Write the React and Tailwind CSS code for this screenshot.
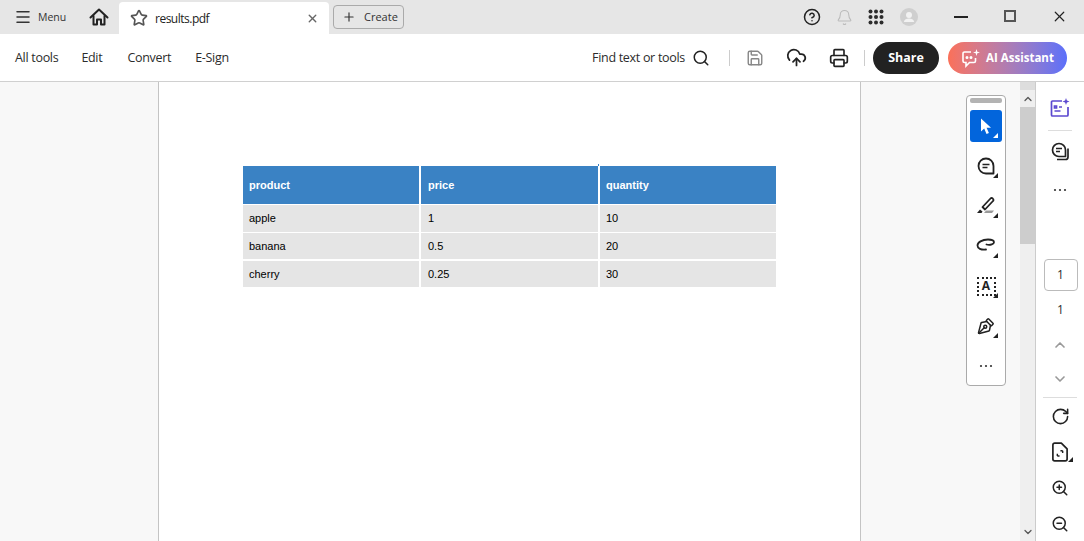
import React from 'react'
import { Menu, Star, X, Plus, CircleHelp, Bell, Search, Save, CloudUpload, Printer, ChevronUp, ChevronDown, RotateCw, ZoomIn, ZoomOut, PenTool } from 'lucide-react'

const font = { fontFamily: '"Open Sans", "Noto Sans", sans-serif' }

function Corner({ white }) {
  return (
    <span className={`absolute right-[4px] bottom-[4px] w-0 h-0 border-l-[5px] border-l-transparent border-b-[5px] ${white ? 'border-b-white' : 'border-b-[#222]'}`} />
  )
}

function HomeIcon() {
  return (
    <svg width="20" height="18" viewBox="0 0 20 18" fill="none" stroke="#222" strokeWidth="2" strokeLinejoin="round" strokeLinecap="round">
      <path d="M1.500 9.500L10 1.500l8.500 8" />
      <path d="M4.500 8v8.500h3.500V11.500h4v5h3.500V8" />
    </svg>
  )
}

function AppsGrid() {
  return (
    <svg width="16" height="16" viewBox="0 0 16 16" fill="#2c2c2c">
      {[2.500, 8, 13.500].map(y => [2.500, 8, 13.500].map(x => <circle key={`${x}-${y}`} cx={x} cy={y} r="2" />))}
    </svg>
  )
}

function Avatar() {
  return (
    <svg width="18" height="18" viewBox="0 0 18 18">
      <circle cx="9" cy="9" r="9" fill="#cfcfcf" />
      <circle cx="9" cy="7" r="3" fill="#f2f2f2" />
      <path d="M3.800 14c.6-2.600 2.600-3.400 5.200-3.400s4.600.8 5.200 3.400z" fill="#f2f2f2" />
    </svg>
  )
}

function AiIcon() {
  return (
    <svg width="20" height="20" viewBox="0 0 20 20" fill="none" stroke="#fff" strokeWidth="1.600">
      <path d="M10 4H3.500A1.500 1.500 0 0 0 2 5.500V13a1.500 1.500 0 0 0 1.500 1.500H5V18l3.500-3.500H13a1.500 1.500 0 0 0 1.500-1.500V10" />
      <circle cx="6" cy="9.500" r="0.700" fill="#fff" />
      <circle cx="10" cy="9.500" r="0.700" fill="#fff" />
      <path d="M15.500 1l.8 2.700L19 4.500l-2.700.8-.8 2.700-.8-2.700L12 4.500l2.700-.8z" fill="#fff" stroke="none" />
    </svg>
  )
}

function Cursor() {
  return (
    <svg width="12" height="17" viewBox="0 0 12 17" fill="#fff">
      <path d="M1 0.500v13l3.200-3 2.300 5.500 2.400-1-2.300-5.300H11z" />
    </svg>
  )
}

function Dots() {
  return (
    <svg width="14" height="4" viewBox="0 0 14 4" fill="#333">
      <circle cx="2" cy="2" r="1.100" />
      <circle cx="7" cy="2" r="1.100" />
      <circle cx="12" cy="2" r="1.100" />
    </svg>
  )
}

function Bubble({ size = 18 }) {
  return (
    <svg width={size} height={size} viewBox="0 0 18 18" fill="none" stroke="#222" strokeWidth="1.800">
      <path d="M9 1.500a7.500 7.500 0 1 0 0 15h7.500V9A7.500 7.500 0 0 0 9 1.500z" strokeLinejoin="round" />
      <path d="M5.500 7.500h7M5.500 10.500h5" strokeWidth="1.500" />
    </svg>
  )
}

function Highlighter() {
  return (
    <svg width="20" height="20" viewBox="0 0 20 20" fill="none" stroke="#222" strokeWidth="1.800">
      <path d="M6.500 11l8-8.500a1.500 1.500 0 0 1 2.200 0l.3.3a1.500 1.500 0 0 1 0 2.200L9 13.500z" strokeLinejoin="round" />
      <path d="M1 17l3-3.500 2.500 2-1 1.500z" fill="#222" stroke="none" />
      <path d="M8 17l2-2.500h8L16 17z" fill="#9a9a9a" stroke="none" />
    </svg>
  )
}

function Lasso() {
  return (
    <svg width="20" height="16" viewBox="0 0 20 16" fill="none" stroke="#222" strokeWidth="1.800" strokeLinecap="round">
      <path d="M10 11.500C5 12 1.500 10.500 1.500 7.500S6 1.500 12 1.500c4 0 6 1.200 6 2.800S14.500 7.500 10.500 6.500" />
    </svg>
  )
}

function TextSelect() {
  return (
    <div className="w-[19px] h-[19px] border-2 border-dotted border-[#222] flex items-center justify-center text-[12px] font-bold text-[#222] leading-none">
      A
    </div>
  )
}

function Tool({ children }) {
  return (
    <div className="relative w-[32px] h-[32px] mt-[8px] flex items-center justify-center">
      {children}
      <Corner />
    </div>
  )
}

function DocResize() {
  return (
    <svg width="16" height="20" viewBox="0 0 18 22" fill="none" stroke="#222" strokeWidth="1.900">
      <path d="M10.500 1H3a2 2 0 0 0-2 2v16a2 2 0 0 0 2 2h12a2 2 0 0 0 2-2V7.500z" strokeLinejoin="round" />
      <path d="M6 15.500v-2.500M6 15.500h2.500M12 9.500V12M12 9.500H9.500" strokeWidth="1.600" />
    </svg>
  )
}

function ToolsBadge() {
  return (
    <svg width="20" height="20" viewBox="0 0 20 20" fill="none" stroke="#5c49d0" strokeWidth="1.700">
      <path d="M12 3H2.500A1 1 0 0 0 1.500 4v13a1 1 0 0 0 1 1H17a1 1 0 0 0 1-1V9" />
      <path d="M4.500 8h2v2h-2zM4.500 13h6M9 9h3" />
      <path d="M16 0l.9 2.600L19.500 3.500l-2.600.9L16 7l-.9-2.600-2.600-.9 2.600-.9z" fill="#5c49d0" stroke="none" />
    </svg>
  )
}

function CommentStack() {
  return (
    <svg width="19" height="19" viewBox="0 0 19 19" fill="none" stroke="#222" strokeWidth="1.700">
      <path d="M8 1.500a6.500 6.500 0 1 0 0 13h6.500V8A6.500 6.500 0 0 0 8 1.500z" strokeLinejoin="round" />
      <path d="M5 6.500h6M5 9.500h4" strokeWidth="1.400" />
      <path d="M17 6.500V15a2.500 2.500 0 0 1-2.500 2.500H6" />
    </svg>
  )
}

const rows = [
  ['apple', '1', '10', 'h-[27px]'],
  ['banana', '0.5', '20', 'h-[26px] mt-px'],
  ['cherry', '0.25', '30', 'h-[26px] mt-[2px]'],
]

const cellPad = ['pl-[6px]', 'pl-[7px]', 'pl-[6px]']

function ResultsTable() {
  return (
    <div className="relative w-[533px] text-[11px] text-black" style={{ fontFamily: '"Liberation Sans", sans-serif' }}>
      <span className="absolute left-[355px] -top-[2px] w-px h-[2px] bg-[#3a82c4]" />
      <div className="grid grid-cols-[176px_177px_176px] gap-x-[2px] h-[38px] mb-px">
        {['product', 'price', 'quantity'].map((h, i) => (
          <div key={h} className={`bg-[#3a82c4] text-white font-bold flex items-center ${cellPad[i]}`}>{h}</div>
        ))}
      </div>
      {rows.map(r => (
        <div key={r[0]} className={`grid grid-cols-[176px_177px_176px] gap-x-[2px] ${r[3]}`}>
          {r.slice(0, 3).map((c, i) => (
            <div key={i} className={`bg-[#e5e5e5] flex items-center ${cellPad[i]}`}>{c}</div>
          ))}
        </div>
      ))}
    </div>
  )
}

export default function App() {
  return (
    <div className="w-[1084px] h-[541px] overflow-hidden flex flex-col bg-white text-[#2c2c2c]" style={font}>
      {/* title bar */}
      <div className="h-[34px] shrink-0 bg-[#e6e6e6] flex items-end">
        <div className="h-[34px] w-[119px] flex items-center shrink-0">
          <Menu size={18} strokeWidth={2} className="ml-[14px] text-[#333]" />
          <span className="ml-[6px] pt-px text-[10.500px] text-[#333]">Menu</span>
          <div className="ml-[23px] flex"><HomeIcon /></div>
        </div>
        <div className="w-[210px] h-[32px] bg-white rounded-t-[4px] flex items-center pl-[11px] pr-[10px] shrink-0">
          <Star size={18} strokeWidth={2.200} className="text-[#555]" />
          <span className="ml-[7px] pt-px text-[12px] tracking-[-0.5px] text-[#222]">results.pdf</span>
          <X size={13} strokeWidth={2.500} className="ml-auto text-[#666]" />
        </div>
        <div className="self-center ml-[4px] w-[71px] h-[24px] border border-[#aaa] rounded-[4px] flex items-center pl-[8px] text-[11px] text-[#333]">
          <Plus size={14} strokeWidth={2} />
          <span className="ml-[8px] pt-px">Create</span>
        </div>
        <div className="ml-auto h-[34px] flex items-center">
          <CircleHelp size={18} strokeWidth={2} className="text-[#222]" />
          <Bell size={17} strokeWidth={1.500} className="ml-[15px] text-[#bbb]" />
          <div className="ml-[15px] flex"><AppsGrid /></div>
          <div className="ml-[16px] flex"><Avatar /></div>
          <div className="ml-[36px] w-[14px] h-[2px] bg-[#222]" />
          <div className="ml-[36px] -mt-[2px] w-[12px] h-[12px] border-2 border-[#555]" />
          <X size={17} strokeWidth={1.700} className="ml-[35px] mr-[16px] -mt-[2px] text-[#222]" />
        </div>
      </div>

      {/* toolbar */}
      <div className="h-[48px] shrink-0 border-b border-[#d0d0d0] flex items-center text-[12.500px] text-[#2c2c2c]">
        <span className="ml-[15px] pt-[2px] tracking-[-0.3px]">All tools</span>
        <span className="ml-[23px] pt-[2px] tracking-[-0.3px]">Edit</span>
        <span className="ml-[25px] pt-[2px] tracking-[-0.3px]">Convert</span>
        <span className="ml-[24px] pt-[2px] tracking-[-0.3px]">E-Sign</span>
        <span className="ml-auto pt-[2px] tracking-[-0.3px]">Find text or tools</span>
        <Search size={18} strokeWidth={2} className="ml-[7px] text-[#222]" />
        <div className="ml-[19px] w-px h-[16px] bg-[#ccc]" />
        <Save size={18} strokeWidth={1.900} className="ml-[16px] text-[#888]" />
        <CloudUpload size={21} strokeWidth={2} className="ml-[22px] text-[#222]" />
        <Printer size={20} strokeWidth={2} className="ml-[22px] text-[#222]" />
        <div className="ml-[15px] w-px h-[16px] bg-[#ccc]" />
        <button className="ml-[8px] w-[66px] h-[32px] pt-[2px] rounded-full bg-[#222] text-white font-bold text-[12.500px]">Share</button>
        <button className="ml-[9px] mr-[17px] w-[119px] h-[32px] rounded-full bg-gradient-to-r from-[#fb7058] to-[#5b6ffa] text-white font-bold text-[11.500px] flex items-center justify-center gap-[5px]">
          <AiIcon />
          <span className="pt-px">AI Assistant</span>
        </button>
      </div>

      {/* body */}
      <div className="flex-1 flex min-h-0">
        <div className="w-[159px] shrink-0 bg-[#f8f8f8] border-r border-[#c4c4c4]" />
        <div className="w-[701px] shrink-0 bg-white pl-[84px] pt-[84px]">
          <ResultsTable />
        </div>
        <div className="w-[160px] shrink-0 bg-[#f8f8f8] border-l border-[#c4c4c4] pl-[105px] pt-[13px]">
          <div className="w-[40px] h-[291px] bg-white border border-[#aaa] rounded-[4px] flex flex-col items-center pt-[2px]">
            <div className="w-[32px] h-[5px] rounded-[2px] bg-[#b3b3b3] shrink-0" />
            <div className="relative mt-[7px] w-[32px] h-[32px] rounded-[3px] bg-[#0265dc] flex items-center justify-center shrink-0">
              <Cursor />
              <Corner white />
            </div>
            <Tool><Bubble /></Tool>
            <Tool><Highlighter /></Tool>
            <Tool><Lasso /></Tool>
            <Tool><TextSelect /></Tool>
            <Tool><PenTool size={18} strokeWidth={2} className="-rotate-90 text-[#222]" /></Tool>
            <div className="mt-[8px] h-[32px] flex items-center"><Dots /></div>
          </div>
        </div>

        {/* scrollbar */}
        <div className="w-[16px] shrink-0 bg-[#efefef] border-r border-[#ccc] flex flex-col">
          <div className="h-[8px] bg-[#dddddd] shrink-0" />
          <div className="h-[17px] flex items-center justify-center shrink-0">
            <ChevronUp size={12} strokeWidth={2.500} className="text-[#555]" />
          </div>
          <div className="h-[137px] bg-[#cdcdcd] shrink-0" />
          <div className="mt-auto h-[18px] flex items-center justify-center">
            <ChevronDown size={12} strokeWidth={2.500} className="text-[#555]" />
          </div>
        </div>

        {/* right rail */}
        <div className="flex-1 bg-white flex flex-col items-center">
          <div className="mt-[16px] flex"><ToolsBadge /></div>
          <div className="mt-[12px] w-[24px] h-px bg-[#ddd]" />
          <div className="mt-[11px] flex"><CommentStack /></div>
          <div className="mt-[27px] flex"><Dots /></div>
          <div className="mt-[67px] ml-px w-[34px] h-[32px] border border-[#bbb] rounded-[4px] flex items-center justify-center text-[12px]">1</div>
          <div className="mt-[10px] ml-px text-[12px] leading-[18px]">1</div>
          <ChevronUp size={16} strokeWidth={2.500} className="mt-[18px] text-[#999]" />
          <ChevronDown size={16} strokeWidth={2.500} className="mt-[18px] text-[#999]" />
          <div className="mt-[10px] w-[34px] h-px bg-[#ddd]" />
          <RotateCw size={19} strokeWidth={2} className="mt-[9px] text-[#222]" />
          <div className="relative mt-[16px] w-[20px] h-[20px] flex justify-center">
            <DocResize />
            <span className="absolute -right-[3px] bottom-0 w-0 h-0 border-l-[5px] border-l-transparent border-b-[5px] border-b-[#222]" />
          </div>
          <ZoomIn size={18} strokeWidth={2} className="mt-[17px] text-[#222]" />
          <ZoomOut size={18} strokeWidth={2} className="mt-[18px] text-[#222]" />
        </div>
      </div>
    </div>
  )
}
